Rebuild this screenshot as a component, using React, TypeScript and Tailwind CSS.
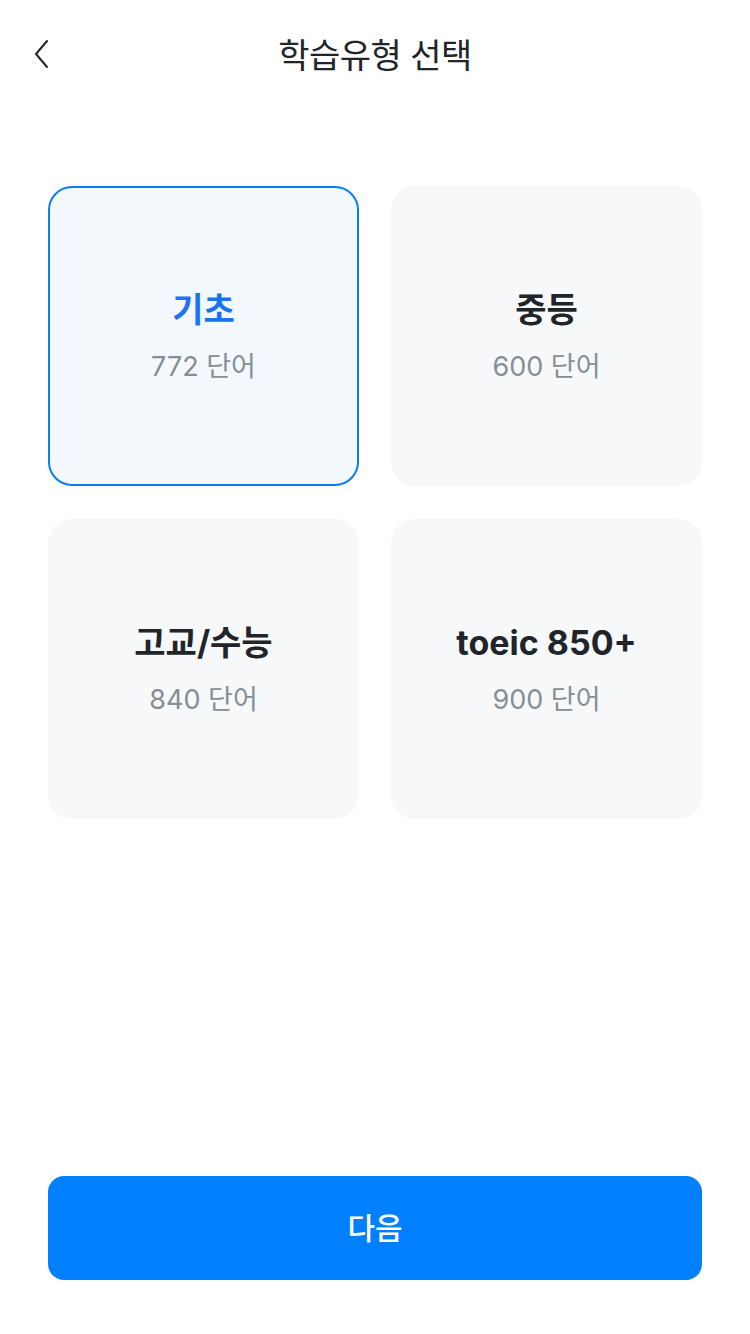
import React, { useState } from "react";

const items = [
  { title: "기초", count: "772 단어" },
  { title: "중등", count: "600 단어" },
  { title: "고교/수능", count: "840 단어" },
  { title: "toeic 850+", count: "900 단어" },
];

export default function App() {
  const [sel, setSel] = useState(0);
  return (
    <div
      className="w-[750px] h-[1334px] bg-white flex flex-col"
      style={{ fontFamily: 'Inter, "Noto Sans CJK KR", sans-serif' }}
    >
      <div className="relative h-[110px] flex items-center justify-center">
        <button className="absolute left-[28px] top-[36px] w-[28px] h-[36px] flex items-center justify-center">
          <svg width="20" height="32" viewBox="0 0 20 32" fill="none">
            <path d="M15 3 L4 16 L15 29" stroke="#212529" strokeWidth="2" strokeLinecap="round" strokeLinejoin="round" />
          </svg>
        </button>
        <h1 className="text-[34px] font-normal text-[#212529] tracking-[-0.5px]">학습유형 선택</h1>
      </div>
      <div className="grid grid-cols-2 gap-x-[32px] gap-y-[33px] px-[48px] mt-[76px]">
        {items.map((it, i) => {
          const active = i === sel;
          return (
            <button
              key={i}
              onClick={() => setSel(i)}
              className={
                "h-[300px] rounded-[24px] flex flex-col items-center justify-center pt-[5px] " +
                (active ? "bg-[#f3f8fd] border-2 border-[#0a7cf5]" : "bg-[#f7f8fa] border-2 border-transparent")
              }
            >
              <span className={"text-[34px] font-bold leading-[40px] " + (active ? "text-[#1a73f0]" : "text-[#212529]")}>
                {it.title}
              </span>
              <span className="mt-[17px] text-[27px] leading-[40px] text-[#868e96]">{it.count}</span>
            </button>
          );
        })}
      </div>
      <div className="mt-auto px-[48px] pb-[54px]">
        <button className="w-full h-[104px] rounded-[16px] bg-[#0080ff] text-white text-[30px] font-medium">
          다음
        </button>
      </div>
    </div>
  );
}
